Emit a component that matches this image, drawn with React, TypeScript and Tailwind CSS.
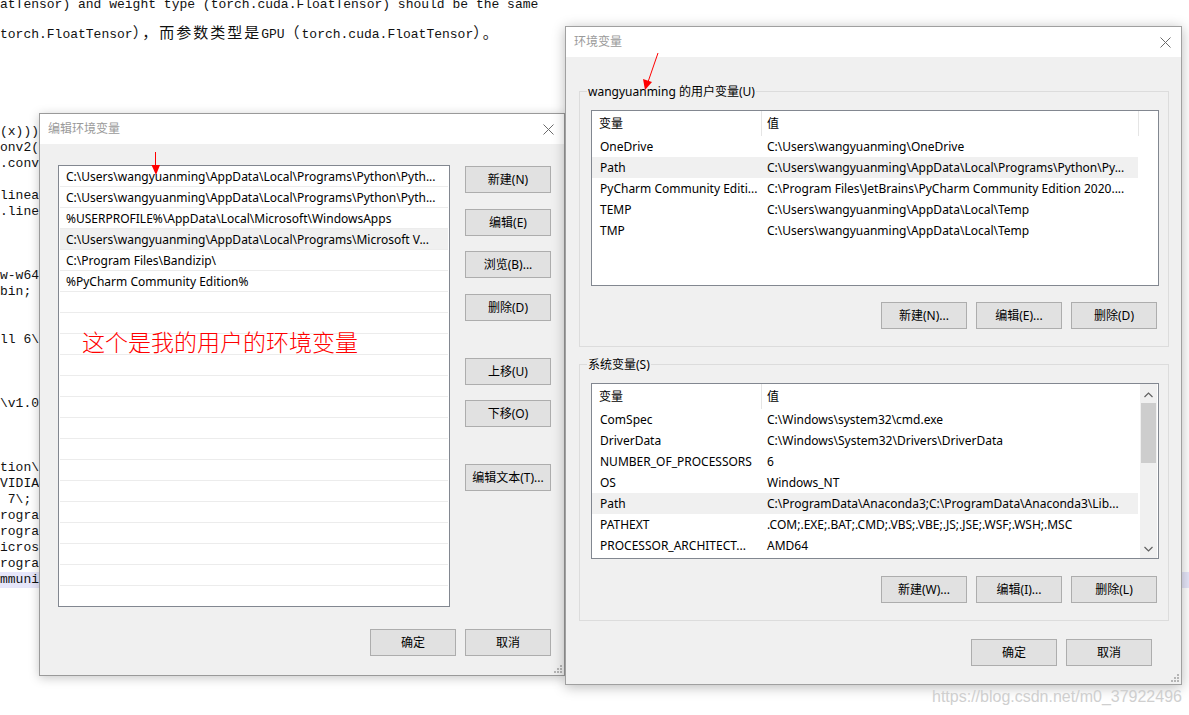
import React from 'react'

const ui = "font-['Noto_Sans','Noto_Sans_CJK_SC',sans-serif]"
const mono = "font-['Liberation_Mono','Noto_Sans_CJK_SC',monospace]"

const codeLines = [
  '(x)))',
  'onv2(x)))',
  '.conv3(x)',
  '',
  'linear1(x)',
  '.linear2(x)',
  '',
  '',
  '',
  'w-w64\\bin;',
  'bin;',
  '',
  '',
  'll 6\\bin;',
  '',
  '',
  '',
  '\\v1.0\\',
  '',
  '',
  '',
  'tion\\bin;',
  'VIDIA Corporation',
  ' 7\\;',
  'rograms\\Python',
  'rograms\\Python',
  'icrosoft\\WindowsApps',
  'rograms\\Microsoft',
  'mmunity Edition',
]

const pathRows = [
  'C:\\Users\\wangyuanming\\AppData\\Local\\Programs\\Python\\Pyth...',
  'C:\\Users\\wangyuanming\\AppData\\Local\\Programs\\Python\\Pyth...',
  '%USERPROFILE%\\AppData\\Local\\Microsoft\\WindowsApps',
  'C:\\Users\\wangyuanming\\AppData\\Local\\Programs\\Microsoft V...',
  'C:\\Program Files\\Bandizip\\',
  '%PyCharm Community Edition%',
]

const userVars = [
  ['OneDrive', 'C:\\Users\\wangyuanming\\OneDrive'],
  ['Path', 'C:\\Users\\wangyuanming\\AppData\\Local\\Programs\\Python\\Py...'],
  ['PyCharm Community Editi...', 'C:\\Program Files\\JetBrains\\PyCharm Community Edition 2020....'],
  ['TEMP', 'C:\\Users\\wangyuanming\\AppData\\Local\\Temp'],
  ['TMP', 'C:\\Users\\wangyuanming\\AppData\\Local\\Temp'],
]

const sysVars = [
  ['ComSpec', 'C:\\Windows\\system32\\cmd.exe'],
  ['DriverData', 'C:\\Windows\\System32\\Drivers\\DriverData'],
  ['NUMBER_OF_PROCESSORS', '6'],
  ['OS', 'Windows_NT'],
  ['Path', 'C:\\ProgramData\\Anaconda3;C:\\ProgramData\\Anaconda3\\Lib...'],
  ['PATHEXT', '.COM;.EXE;.BAT;.CMD;.VBS;.VBE;.JS;.JSE;.WSF;.WSH;.MSC'],
  ['PROCESSOR_ARCHITECT...', 'AMD64'],
]

function CloseX() {
  return (
    <svg width="11" height="11" viewBox="0 0 11 11">
      <path d="M0.5 0.5 L10.5 10.5 M10.5 0.5 L0.5 10.5" stroke="#6b6b6b" strokeWidth="1" />
    </svg>
  )
}

function Grip() {
  return (
    <svg width="9" height="9" viewBox="0 0 9 9" className="absolute right-[2px] bottom-[2px]">
      <rect x="7" y="1" width="2" height="2" fill="#b5b5b5" />
      <rect x="4" y="4" width="2" height="2" fill="#b5b5b5" />
      <rect x="7" y="4" width="2" height="2" fill="#b5b5b5" />
      <rect x="1" y="7" width="2" height="2" fill="#b5b5b5" />
      <rect x="4" y="7" width="2" height="2" fill="#b5b5b5" />
      <rect x="7" y="7" width="2" height="2" fill="#b5b5b5" />
    </svg>
  )
}

function Btn({ label, className = '' }: { label: string; className?: string }) {
  return (
    <div className={`h-[27px] w-[86px] shrink-0 border border-[#adadad] bg-[#e1e1e1] flex items-center justify-center text-[12px] text-black ${className}`}>
      {label}
    </div>
  )
}

function BlogText() {
  return (
    <div className={`${mono} text-[13px] text-[#111] whitespace-nowrap`}>
      <div className="leading-[16px] -mt-[3px]">atTensor) and weight type (torch.cuda.FloatTensor) should be the same</div>
      <div className="leading-[16px] mt-[14px]">
        torch.FloatTensor<span className="text-[15px] tracking-[2px]">），而参数类型是</span>GPU
        <span className="text-[15px] tracking-[2px]">（</span>torch.cuda.FloatTensor
        <span className="text-[15px] tracking-[2px]">）。</span>
      </div>
      <div className="mt-[81px]">
        {codeLines.map((l, i) => (
          <div key={i} className={`h-[16px] leading-[16px] ${i === 28 ? 'bg-[#e6e6fa]' : ''}`}>
            <span className="inline-block w-[39px] overflow-hidden whitespace-pre align-top">{l}</span>
          </div>
        ))}
      </div>
    </div>
  )
}

function EditDialog() {
  const rows = Array.from({ length: 21 }, (_, i) => pathRows[i] ?? '')
  return (
    <div className={`${ui} absolute left-[39px] top-[113px] w-[526px] h-[563px] border border-[#9a9a9a] bg-[#f0f0f0] shadow-[0_2px_10px_rgba(0,0,0,0.22)] flex flex-col`}>
      <div className="h-[30px] bg-white flex items-center justify-between pl-[8px] pr-[10px]">
        <span className="text-[12px] text-[#9a9a9a]">编辑环境变量</span>
        <CloseX />
      </div>
      <div className="flex-1 pl-[18px] pr-[13px] pt-[21px]">
        <div className="flex gap-[15px]">
          <div className="w-[392px] h-[442px] border border-[#828790] bg-white overflow-hidden">
            {rows.map((r, i) => (
              <div
                key={i}
                className={`h-[21px] border-b border-[#ececec] mx-[1px] flex items-center pt-[2px] pl-[6px] text-[12px] text-black whitespace-nowrap ${i === 3 ? 'bg-[#f0f0f0]' : ''}`}
              >
                {r}
              </div>
            ))}
          </div>
          <div className="flex flex-col">
            <Btn label="新建(N)" className="mt-[1px]" />
            <Btn label="编辑(E)" className="mt-[16px]" />
            <Btn label="浏览(B)..." className="mt-[15px]" />
            <Btn label="删除(D)" className="mt-[16px]" />
            <Btn label="上移(U)" className="mt-[37px]" />
            <Btn label="下移(O)" className="mt-[15px]" />
            <Btn label="编辑文本(T)..." className="mt-[37px]" />
          </div>
        </div>
        <div className="flex justify-end gap-[9px] mt-[22px]">
          <Btn label="确定" />
          <Btn label="取消" />
        </div>
      </div>
      <Grip />
    </div>
  )
}

function VarList({ vars, selected, scroll }: { vars: string[][]; selected: number; scroll?: boolean }) {
  return (
    <div className="w-[568px] h-[176px] border border-[#828790] bg-white flex text-[12px] text-black">
      <div className="w-[546px]">
        <div className="h-[25px] flex items-center">
          <div className="w-[169px] pl-[7px] pt-[1px]">变量</div>
          <div className="h-full border-l border-[#e5e5e5] pl-[5px] pt-[1px] flex items-center">值</div>
        </div>
        {vars.map(([n, v], i) => (
          <div key={n + i} className={`h-[21px] flex items-center pt-[1px] whitespace-nowrap ${i === selected ? 'bg-[#f0f0f0]' : ''}`}>
            <div className="w-[169px] pl-[8px] overflow-hidden">{n}</div>
            <div className="pl-[6px]">{v}</div>
          </div>
        ))}
      </div>
      {scroll ? (
        <div className="ml-[2px] w-[17px] bg-[#f0f0f0] flex flex-col items-center">
          <svg width="9" height="6" viewBox="0 0 9 6" className="mt-[8px]">
            <path d="M0.5 5 L4.5 1 L8.5 5" fill="none" stroke="#606060" strokeWidth="1.2" />
          </svg>
          <div className="mt-[5px] w-[15px] h-[60px] bg-[#cdcdcd]" />
          <div className="flex-1" />
          <svg width="9" height="6" viewBox="0 0 9 6" className="mb-[6px]">
            <path d="M0.5 1 L4.5 5 L8.5 1" fill="none" stroke="#606060" strokeWidth="1.2" />
          </svg>
        </div>
      ) : (
        <div className="h-[25px] border-l border-[#e5e5e5]" />
      )}
    </div>
  )
}

function Group({ label, children }: { label: string; children: React.ReactNode }) {
  return (
    <div className="relative border border-[#dcdcdc] pl-[11px] pr-[10px] pt-[18px] pb-[17px]">
      <span className="absolute left-[7px] -top-[9px] bg-[#f0f0f0] px-[1px] text-[12px] leading-[18px] text-black">{label}</span>
      {children}
    </div>
  )
}

function EnvDialog() {
  return (
    <div className={`${ui} absolute left-[565px] top-[26px] w-[617px] h-[659px] border border-[#a0a0a0] bg-[#f0f0f0] shadow-[0_2px_12px_rgba(0,0,0,0.28)] flex flex-col`}>
      <div className="h-[30px] bg-white flex items-center justify-between pl-[8px] pr-[10px]">
        <span className="text-[12px] text-[#9a9a9a]">环境变量</span>
        <CloseX />
      </div>
      <div className="flex-1 pl-[13px] pr-[12px] pt-[34px]">
        <Group label="wangyuanming 的用户变量(U)">
          <VarList vars={userVars} selected={1} />
          <div className="flex justify-end gap-[9px] mt-[16px] pr-[1px]">
            <Btn label="新建(N)..." />
            <Btn label="编辑(E)..." />
            <Btn label="删除(D)" />
          </div>
        </Group>
        <div className="mt-[17px]">
          <Group label="系统变量(S)">
            <VarList vars={sysVars} selected={4} scroll />
            <div className="flex justify-end gap-[9px] mt-[17px] pr-[1px]">
              <Btn label="新建(W)..." />
              <Btn label="编辑(I)..." />
              <Btn label="删除(L)" />
            </div>
          </Group>
        </div>
        <div className="flex justify-end gap-[9px] mt-[18px] pr-[17px]">
          <Btn label="确定" />
          <Btn label="取消" />
        </div>
      </div>
      <Grip />
    </div>
  )
}

function Arrows() {
  return (
    <svg width="1189" height="715" viewBox="0 0 1189 715" className="absolute left-0 top-0 pointer-events-none">
      <line x1="155.5" y1="152" x2="155.5" y2="167" stroke="#ff0000" strokeWidth="1" />
      <path d="M151.5 165 L160 165 L156 175 Z" fill="#ff0000" />
      <line x1="658" y1="53" x2="648" y2="82" stroke="#ff0000" strokeWidth="1" />
      <path d="M643 79 L652 82 L645 90 Z" fill="#ff0000" />
    </svg>
  )
}

export default function App() {
  return (
    <div className="relative w-[1189px] h-[715px] overflow-hidden bg-white">
      <BlogText />
      <EditDialog />
      <EnvDialog />
      <div className="absolute left-[82px] top-[329px] text-[23px] leading-[24px] text-[#ff0000] font-['Noto_Sans_CJK_SC',sans-serif] font-light">
        这个是我的用户的环境变量
      </div>
      <Arrows />
      <div className="absolute left-[932px] top-[688px] text-[16px] leading-[18px] text-[#cfcfcf] font-['Liberation_Sans',Arial,sans-serif]">
        https://blog.csdn.net/m0_37922496
      </div>
    </div>
  )
}
